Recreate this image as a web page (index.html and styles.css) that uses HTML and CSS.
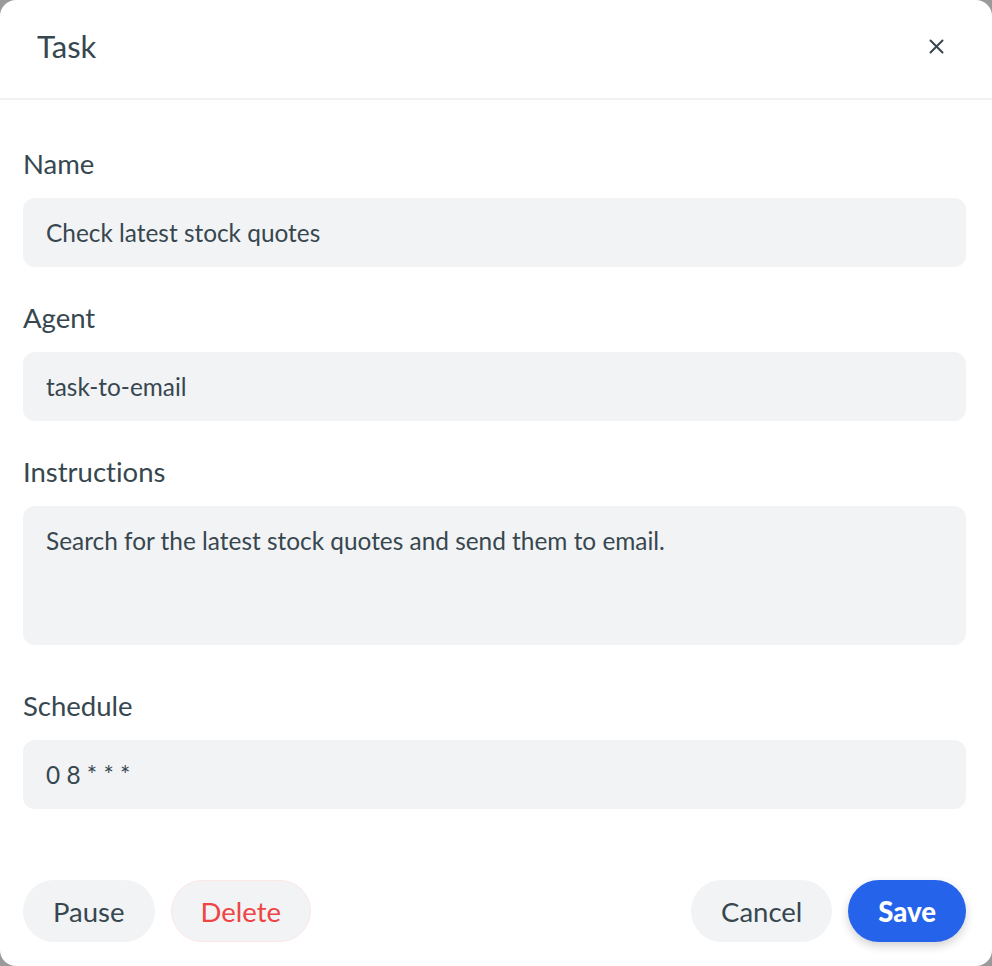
FILE: index.html
```html
<!DOCTYPE html>
<html>
<head>
	<meta charset="utf-8">
	<meta name="viewport" content="width=device-width, initial-scale=1">
	<title>Task</title>
	<link rel="stylesheet" href="styles.css">
</head>
<body>
	<main class="modal">
		<div class="modal-head">
			<h2>Task</h2>
			<button class="close" aria-label="Close">
				<svg width="15" height="15" viewBox="0 0 15 15"><path d="M1.5 1.5L13.5 13.5M13.5 1.5L1.5 13.5" stroke="#37474f" stroke-width="2" stroke-linecap="round"/></svg>
			</button>
		</div>
		<div class="modal-body">
			<div class="field">
				<label>Name</label>
				<input type="text" value="Check latest stock quotes">
			</div>
			<div class="field">
				<label>Agent</label>
				<input type="text" value="task-to-email">
			</div>
			<div class="field">
				<label>Instructions</label>
				<textarea>Search for the latest stock quotes and send them to email.</textarea>
			</div>
			<div class="field">
				<label>Schedule</label>
				<input type="text" value="0 8 * * *">
			</div>
		</div>
		<div class="modal-foot">
			<div class="group">
				<button class="btn">Pause</button>
				<button class="btn danger">Delete</button>
			</div>
			<div class="group">
				<button class="btn">Cancel</button>
				<button class="btn primary">Save</button>
			</div>
		</div>
	</main>
</body>
</html>
```

FILE: styles.css
```css
body{margin: 0;background-color: #9a9a9a;font-family: Lato, 'Noto Sans', sans-serif;color: #37474f;font-variant-ligatures: none;}
.modal{height: 100vh;box-sizing: border-box;background-color: #fff;border-radius: 16px;display: flex;flex-direction: column;overflow: hidden;}
.modal-head{height: 100px;box-sizing: border-box;flex: none;display: flex;align-items: center;justify-content: space-between;padding: 0 40px 6px 37px;border-bottom: 2px solid #f1f2f3;}
.modal-head h2{margin: 0;font-size: 31px;font-weight: normal;}
.close{border: none;background: none;padding: 8px;display: flex;cursor: pointer;}
.modal-body{flex: 1;padding: 46px 26px 0 23px;display: flex;flex-direction: column;gap: 33px;}
.field{display: flex;flex-direction: column;gap: 16px;}
label{font-size: 27.5px;line-height: 36px;}
input, textarea{font-family: inherit;font-size: 24.4px;color: #37474f;background-color: #f2f3f5;border: none;border-radius: 12px;outline: none;padding: 0 23px;box-sizing: border-box;font-variant-ligatures: none;}
input{height: 69px;}
textarea{height: 139px;padding-top: 20px;line-height: 30px;resize: none;margin-bottom: 10px;}
.modal-foot{display: flex;justify-content: space-between;padding: 0 26px 24px 23px;}
.group{display: flex;gap: 16px;}
.btn{font-family: inherit;font-size: 27.5px;height: 62px;padding: 0 29px;border-radius: 31px;border: 1px solid transparent;background-color: #f2f3f5;color: #37474f;cursor: pointer;}
.danger{color: #ef4444;border-color: #fde6e6;}
.primary{background-color: #2563eb;color: #fff;font-weight: 900;box-shadow: 0 4px 10px rgba(0, 0, 0, 0.18);}
```
